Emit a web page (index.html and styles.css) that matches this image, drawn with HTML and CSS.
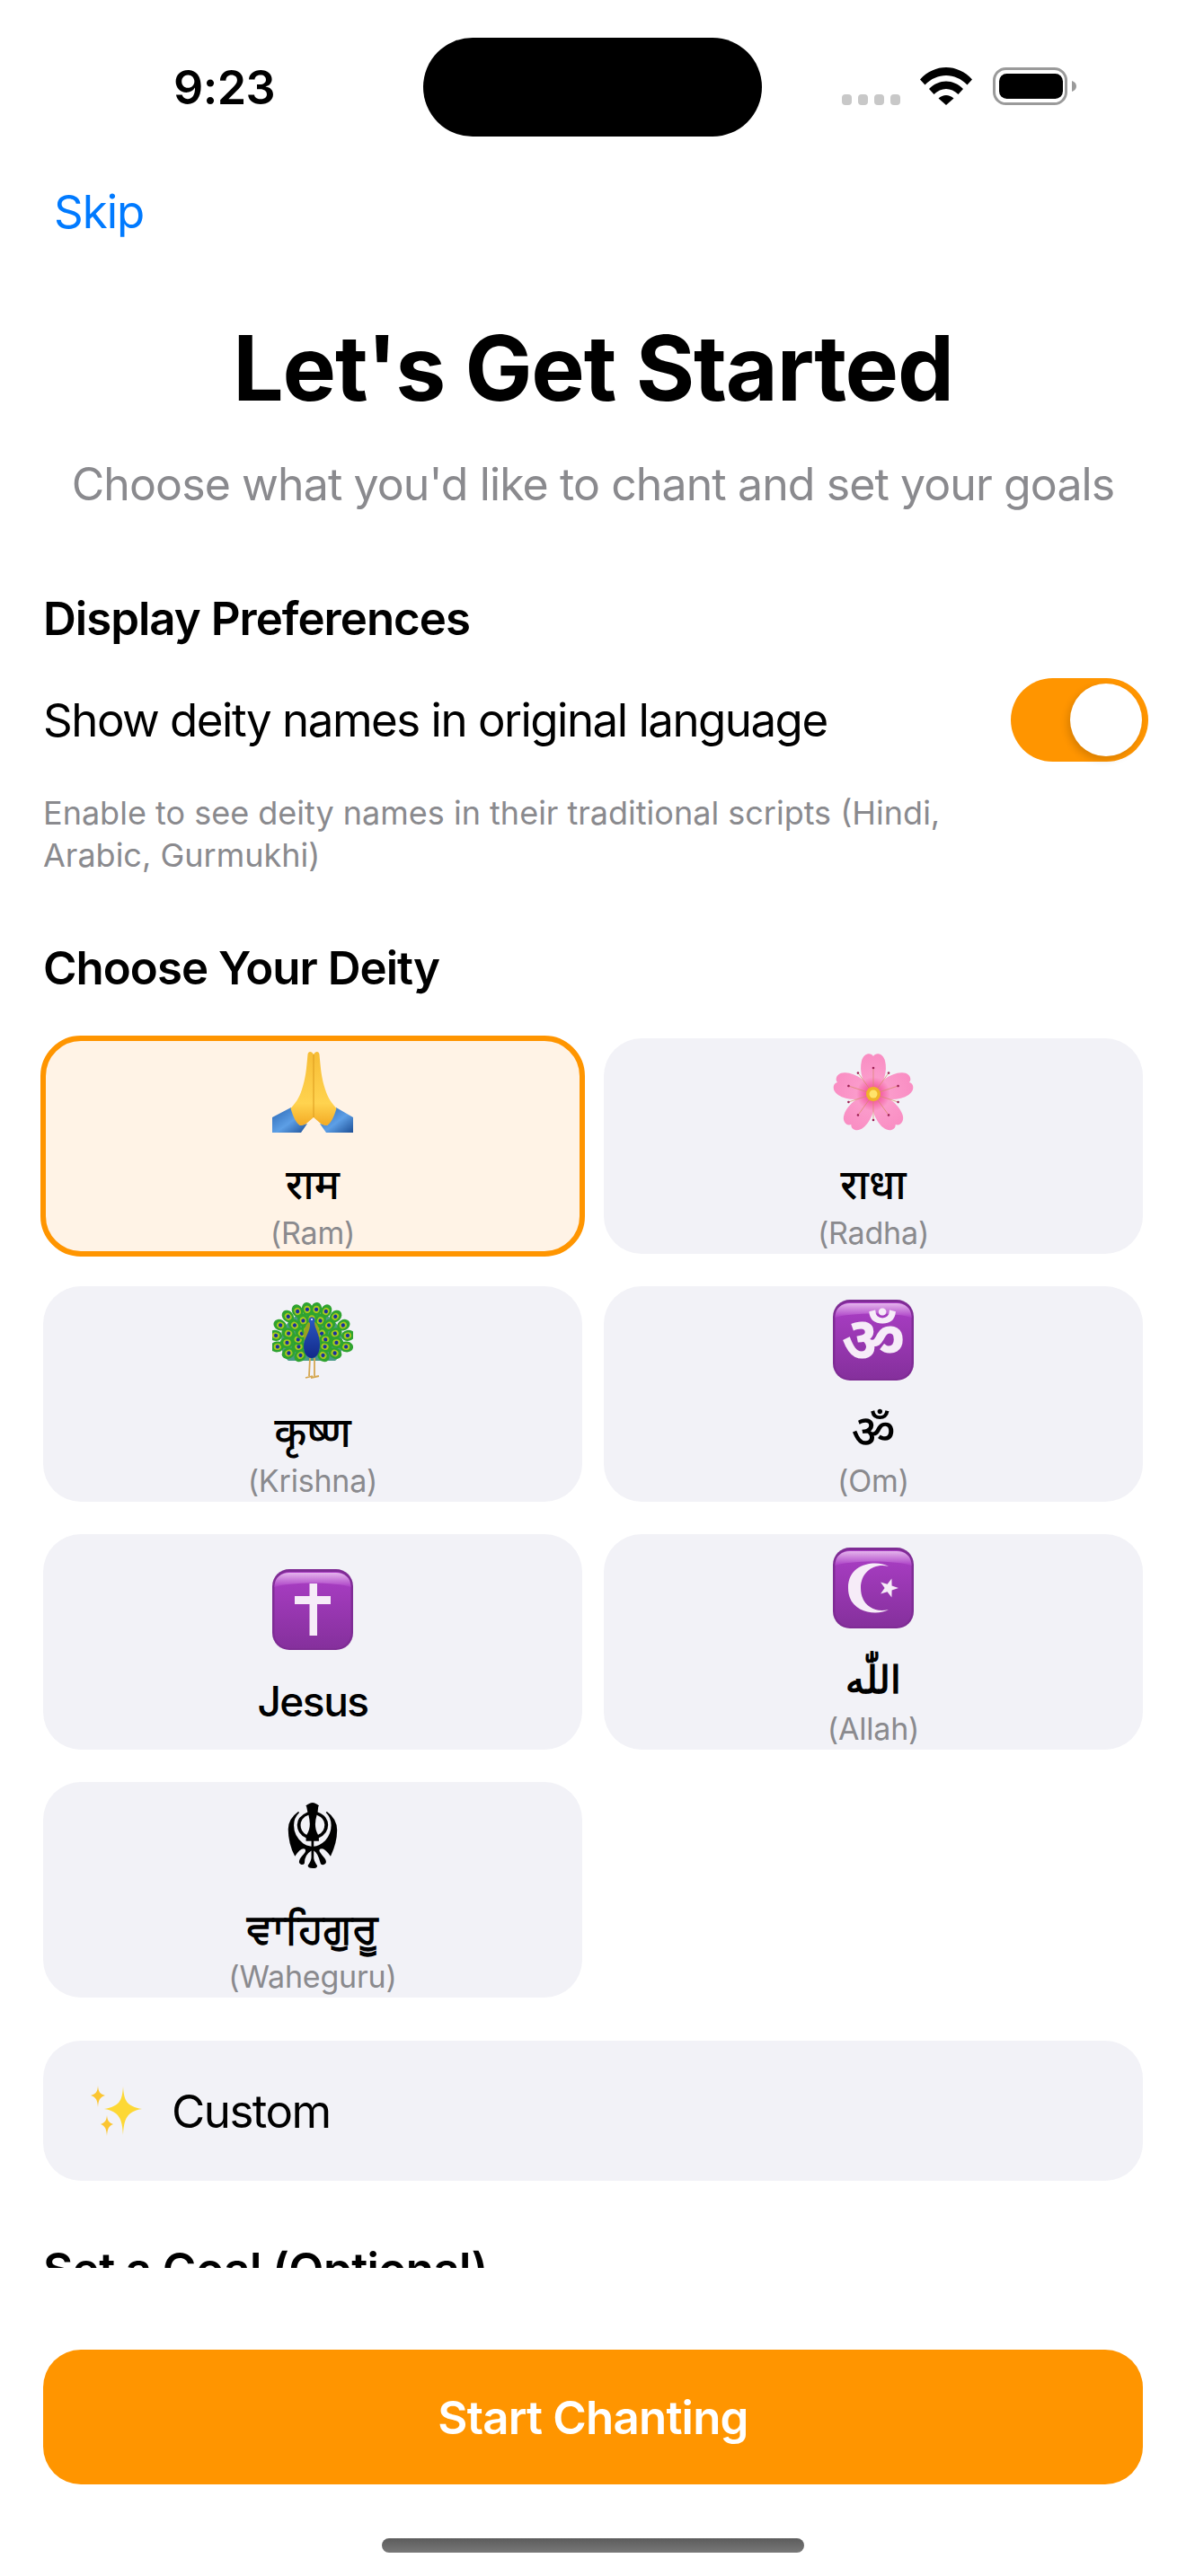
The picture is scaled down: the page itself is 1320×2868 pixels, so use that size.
FILE: index.html
```html
<!DOCTYPE html>
<html>
  <head>
    <title>Let's Get Started</title>
    <meta charset="utf-8">
    <link rel="stylesheet" href="styles.css">
  </head>
  <body>
    <div class="screen">
      <!-- STATUS BAR -->
      <header class="status">
        <span class="time">9:23</span>
        <div class="island"></div>
        <div class="signal"><i></i><i></i><i></i><i></i></div>
        <svg class="wifi" width="58" height="42" viewBox="0 0 58 42">
          <path d="M0 13.5 C16 -4.5 42 -4.5 58 13.5 L52.500 19.500 C39 5.500 19 5.500 5.500 19.500 Z"/>
          <path d="M10 24 C21 12.500 37 12.500 48 24 L42.500 30 C34.500 22 23.500 22 15.500 30 Z"/>
          <path d="M20.500 34.500 C25.500 29.800 32.500 29.800 37.500 34.500 L29 42 Z"/>
        </svg>
        <svg class="battery" width="93" height="42" viewBox="0 0 93 42">
          <rect x="1.500" y="1.500" width="80" height="39" rx="13" fill="none" stroke="#9a9a9a" stroke-width="3"/>
          <rect x="7" y="7" width="71" height="28" rx="8.500"/>
          <path d="M88 15 C91 16 93 18 93 21 C93 24 91 26 88 27 Z" fill="#9a9a9a"/>
        </svg>
      </header>

      <!-- SCROLLING CONTENT -->
      <main class="scroll">
        <nav class="nav"><a class="skip">Skip</a></nav>
        <h1 class="title">Let's Get Started</h1>
        <p class="subtitle">Choose what you'd like to chant and set your goals</p>

        <section class="content">
          <h2 class="heading heading-first">Display Preferences</h2>
          <div class="toggle-row">
            <span class="toggle-label">Show deity names in original language</span>
            <div class="switch"><div class="thumb"></div></div>
          </div>
          <p class="note">Enable to see deity names in their traditional scripts (Hindi, Arabic, Gurmukhi)</p>

          <h2 class="heading">Choose Your Deity</h2>
          <div class="deity-grid">
            <div class="deity selected">
              <div class="emoji">
                <svg width="90" height="90" viewBox="0 0 90 90">
                  <defs>
                    <linearGradient id="hand" x1="0" y1="0" x2="0" y2="1">
                      <stop offset="0" stop-color="#f7bd35"/>
                      <stop offset="0.7" stop-color="#ffd34f"/>
                      <stop offset="1" stop-color="#f3aa24"/>
                    </linearGradient>
                    <linearGradient id="sleeve" x1="0" y1="0" x2="1" y2="1">
                      <stop offset="0" stop-color="#2a66b3"/>
                      <stop offset="0.55" stop-color="#5d9fe6"/>
                      <stop offset="1" stop-color="#1d4f96"/>
                    </linearGradient>
                    <radialGradient id="petal-fill" gradientUnits="userSpaceOnUse" cx="45" cy="47" r="47">
                      <stop offset="0.12" stop-color="#f2529b"/>
                      <stop offset="0.4" stop-color="#fb9bcb"/>
                      <stop offset="1" stop-color="#f98cc2"/>
                    </radialGradient>
                    <path id="petal" d="M45 47 C33 38 29 21 32 10 C34 2 42 0 45 5 C48 0 56 2 58 10 C61 21 57 38 45 47 Z" fill="url(#petal-fill)"/>
                    <g id="stamen">
                      <path d="M45 47 L45 18" stroke="#d98a6a" stroke-width="0.700"/>
                      <circle cx="45" cy="18" r="1.300" fill="#9c1f55"/>
                    </g>
                  </defs>
                  <path d="M0 73 L21 62 L31 82 L39 80 L32 90 L0 90 Z" fill="url(#sleeve)"/>
                  <path d="M90 73 L71 62 L61 82 L53 80 L60 90 L90 90 Z" fill="url(#sleeve)"/>
                  <path d="M46 3 C44 -1 40 -1 39.500 3 C38 20 37 30 33 42 C30 52 25 58 20.500 63 C23 72 27 80 31 82 C36 83 41 77 46 73 Z" fill="url(#hand)"/>
                  <path d="M46 3 C48 -1 52 -1 52.500 3 C54 20 55 30 59 42 C62 52 67 58 71.500 63 C69 72 65 80 61 82 C56 83 51 77 46 73 Z" fill="url(#hand)"/>
                  <path d="M46 3 L46 73" stroke="#dc9a1e" stroke-width="1"/>
                </svg>
              </div>
              <div class="name">राम</div>
              <div class="latin">(Ram)</div>
            </div>
            <div class="deity">
              <div class="emoji">
                <svg width="90" height="90" viewBox="0 0 90 90">
                  <use href="#petal"/>
                  <use href="#petal" transform="rotate(72 45 47)"/>
                  <use href="#petal" transform="rotate(144 45 47)"/>
                  <use href="#petal" transform="rotate(216 45 47)"/>
                  <use href="#petal" transform="rotate(288 45 47)"/>
                  <use href="#stamen"/>
                  <use href="#stamen" transform="rotate(36 45 47)"/>
                  <use href="#stamen" transform="rotate(72 45 47)"/>
                  <use href="#stamen" transform="rotate(108 45 47)"/>
                  <use href="#stamen" transform="rotate(144 45 47)"/>
                  <use href="#stamen" transform="rotate(180 45 47)"/>
                  <use href="#stamen" transform="rotate(216 45 47)"/>
                  <use href="#stamen" transform="rotate(252 45 47)"/>
                  <use href="#stamen" transform="rotate(288 45 47)"/>
                  <use href="#stamen" transform="rotate(324 45 47)"/>
                  <circle cx="45" cy="47" r="8" fill="#f0b429"/>
                  <circle cx="45" cy="47" r="4.500" fill="#ffe36b"/>
                </svg>
              </div>
              <div class="name">राधा</div>
              <div class="latin">(Radha)</div>
            </div>
            <div class="deity">
              <div class="emoji">
                <svg width="90" height="90" viewBox="0 0 90 90">
                  <defs>
                    <g id="eye">
                      <ellipse cx="0" cy="0" rx="6" ry="7.500" fill="#2fa32f"/>
                      <ellipse cx="0" cy="0.500" rx="3.600" ry="4.200" fill="#a8c81e"/>
                      <circle cx="0" cy="0.500" r="2.100" fill="#1a2fa0"/>
                    </g>
                    <linearGradient id="peacock-body" x1="0" y1="0" x2="0" y2="1">
                      <stop offset="0" stop-color="#2a55c0"/>
                      <stop offset="1" stop-color="#122a8a"/>
                    </linearGradient>
                  </defs>
                  <path d="M44 14 C64 14 78 28 78 48 C78 58 75 64 70 68 L18 68 C13 64 10 58 10 48 C10 28 24 14 44 14 Z" fill="#4a9a86"/>
                  <use href="#eye" transform="rotate(-98 44 47) translate(44 8)"/>
                  <use href="#eye" transform="rotate(-80 44 47) translate(44 6)"/>
                  <use href="#eye" transform="rotate(-62 44 47) translate(44 7)"/>
                  <use href="#eye" transform="rotate(-43 44 47) translate(44 8)"/>
                  <use href="#eye" transform="rotate(-25 44 47) translate(44 9)"/>
                  <use href="#eye" transform="rotate(-8 44 47) translate(44 10)"/>
                  <use href="#eye" transform="rotate(8 44 47) translate(44 10)"/>
                  <use href="#eye" transform="rotate(25 44 47) translate(44 9)"/>
                  <use href="#eye" transform="rotate(43 44 47) translate(44 8)"/>
                  <use href="#eye" transform="rotate(62 44 47) translate(44 7)"/>
                  <use href="#eye" transform="rotate(80 44 47) translate(44 6)"/>
                  <use href="#eye" transform="rotate(98 44 47) translate(44 8)"/>
                  <use href="#eye" transform="rotate(-116 44 47) translate(44 18)"/>
                  <use href="#eye" transform="rotate(-92 44 47) translate(44 19)"/>
                  <use href="#eye" transform="rotate(-70 44 47) translate(44 19)"/>
                  <use href="#eye" transform="rotate(-46 44 47) translate(44 20)"/>
                  <use href="#eye" transform="rotate(-22 44 47) translate(44 21)"/>
                  <use href="#eye" transform="rotate(0 44 47) translate(44 21)"/>
                  <use href="#eye" transform="rotate(22 44 47) translate(44 21)"/>
                  <use href="#eye" transform="rotate(46 44 47) translate(44 20)"/>
                  <use href="#eye" transform="rotate(70 44 47) translate(44 19)"/>
                  <use href="#eye" transform="rotate(92 44 47) translate(44 19)"/>
                  <use href="#eye" transform="rotate(116 44 47) translate(44 18)"/>
                  <use href="#eye" transform="rotate(-140 44 47) translate(44 27)"/>
                  <use href="#eye" transform="rotate(-110 44 47) translate(44 31)"/>
                  <use href="#eye" transform="rotate(-80 44 47) translate(44 31)"/>
                  <use href="#eye" transform="rotate(-50 44 47) translate(44 32)"/>
                  <use href="#eye" transform="rotate(-22 44 47) translate(44 33)"/>
                  <use href="#eye" transform="rotate(22 44 47) translate(44 33)"/>
                  <use href="#eye" transform="rotate(50 44 47) translate(44 32)"/>
                  <use href="#eye" transform="rotate(80 44 47) translate(44 31)"/>
                  <use href="#eye" transform="rotate(110 44 47) translate(44 31)"/>
                  <use href="#eye" transform="rotate(140 44 47) translate(44 27)"/>
                  <ellipse cx="44" cy="39" rx="9" ry="15" fill="#98a31f"/>
                  <path d="M42 25 C42 21 47 21 47 25 C47 32 53 38 53 50 C53 60 49 65 44 65 C39 65 35 60 35 52 C35 42 43 36 42 25 Z" fill="url(#peacock-body)"/>
                  <circle cx="44" cy="23" r="3.500" fill="#2a55c0"/>
                  <circle cx="44" cy="22" r="1" fill="#fff"/>
                  <path d="M42 65 L41 85 M47 65 L47 85 M37 87 L45 85 M43 87 L52 85" stroke="#d5a750" stroke-width="1.800" fill="none"/>
                </svg>
              </div>
              <div class="name">कृष्ण</div>
              <div class="latin">(Krishna)</div>
            </div>
            <div class="deity">
              <div class="emoji">
                <svg width="90" height="90" viewBox="0 0 90 90">
                  <defs>
                    <linearGradient id="tile" x1="0" y1="0" x2="0" y2="1">
                      <stop offset="0" stop-color="#ab3ec6"/>
                      <stop offset="1" stop-color="#85309c"/>
                    </linearGradient>
                    <linearGradient id="tile-shine" x1="0" y1="0" x2="0" y2="1">
                      <stop offset="0" stop-color="#e4b4ec"/>
                      <stop offset="1" stop-color="#ab3ec6"/>
                    </linearGradient>
                  </defs>
                  <rect width="90" height="90" rx="19" fill="#7f2c95"/>
                  <rect x="2.500" y="3" width="85" height="85" rx="17" fill="url(#tile)"/>
                  <path d="M2.500 20 C2.500 9 10 4 19 4 L71 4 C80 4 87.500 9 87.500 20 C72 14 18 14 2.500 20 Z" fill="url(#tile-shine)"/>
                  <text class="tile-om" x="45" y="69" text-anchor="middle">ॐ</text>
                </svg>
              </div>
              <div class="name name-om">ॐ</div>
              <div class="latin">(Om)</div>
            </div>
            <div class="deity">
              <div class="emoji">
                <svg width="90" height="90" viewBox="0 0 90 90">
                  <rect width="90" height="90" rx="19" fill="#7f2c95"/>
                  <rect x="2.500" y="3" width="85" height="85" rx="17" fill="url(#tile)"/>
                  <path d="M2.500 20 C2.500 9 10 4 19 4 L71 4 C80 4 87.500 9 87.500 20 C72 14 18 14 2.500 20 Z" fill="url(#tile-shine)"/>
                  <path d="M41.500 16 H50 V30 H65 V39 H50 V74 H41.500 V39 H25 V30 H41.500 Z" fill="#f6ecf8"/>
                </svg>
              </div>
              <div class="name name-latin">Jesus</div>
            </div>
            <div class="deity">
              <div class="emoji">
                <svg width="90" height="90" viewBox="0 0 90 90">
                  <rect width="90" height="90" rx="19" fill="#7f2c95"/>
                  <rect x="2.500" y="3" width="85" height="85" rx="17" fill="url(#tile)"/>
                  <path d="M2.500 20 C2.500 9 10 4 19 4 L71 4 C80 4 87.500 9 87.500 20 C72 14 18 14 2.500 20 Z" fill="url(#tile-shine)"/>
                  <path d="M62 21 C50 14 17 16 17 45 C17 74 50 76 62 69 C46 73 31 64 31 45 C31 27 46 17 62 21 Z" fill="#f6ecf8"/>
                  <path d="M73 45 L65.600 47.600 L65.400 55.500 L60.600 49.200 L53.100 51.500 L57.600 45 L53.100 38.500 L60.600 40.800 L65.400 34.500 L65.600 42.400 Z" fill="#f6ecf8"/>
                </svg>
              </div>
              <div class="name name-arabic">اللّٰه</div>
              <div class="latin">(Allah)</div>
            </div>
            <div class="deity">
              <div class="emoji khanda">☬</div>
              <div class="name name-gurmukhi">ਵਾਹਿਗੁਰੂ</div>
              <div class="latin">(Waheguru)</div>
            </div>
          </div>

          <div class="custom">
            <svg width="60" height="56" viewBox="0 0 60 56">
              <path d="M37 1 C38 17 41 23 58 26 C41 29 38 37 37 55 C36 37 33 29 16 26 C33 23 36 17 37 1 Z" fill="#fdd835"/>
              <path d="M9 0 C9.500 7 11 9 17 11 C11 13 9.500 16 9 24 C8.500 16 7 13 1 11 C7 9 8.500 7 9 0 Z" fill="#fbc531"/>
              <path d="M19 33 C19.500 39 21 41 26 43 C21 45 19.500 48 19 56 C18.500 48 17 45 12 43 C17 41 18.500 39 19 33 Z" fill="#fbc531"/>
            </svg>
            <span class="custom-label">Custom</span>
          </div>

          <h2 class="heading heading-goal">Set a Goal (Optional)</h2>
        </section>
      </main>

      <!-- BOTTOM BUTTON -->
      <footer class="footer">
        <button class="start">Start Chanting</button>
        <div class="home-bar"></div>
      </footer>
    </div>
  </body>
</html>
```

FILE: styles.css
```css
* {
  box-sizing: border-box;
  font-family: Inter, "Noto Sans", sans-serif;
}
body { margin: 0; background: #fff; }
.screen {
  display: flex;
  flex-direction: column;
  width: 1320px;
  height: 2868px;
  overflow: hidden;
}

/* status bar */
.status {
  position: relative;
  flex: none;
  display: flex;
  align-items: flex-start;
  height: 156px;
}
.time {
  width: 113px;
  margin: 67px 0 0 193px;
  font-size: 52px;
  font-weight: 600;
  line-height: 62px;
  letter-spacing: -0.6px;
  white-space: nowrap;
}
.island {
  position: absolute;
  left: 471px;
  top: 42px;
  width: 377px;
  height: 110px;
  border-radius: 55px;
  background: #000;
}
.signal {
  display: flex;
  gap: 7px;
  margin: 105px 0 0 631px;
}
.signal i {
  width: 11px;
  height: 12px;
  border-radius: 4px;
  background: #c8c8c8;
}
.wifi { margin: 75px 0 0 22px; }
.battery { margin: 75px 0 0 23px; }

/* scrolling area */
.scroll {
  flex: none;
  height: 2369px;
  overflow: hidden;
}
.nav { padding: 49px 0 0 60px; }
.skip {
  display: block;
  font-size: 51px;
  line-height: 62px;
  letter-spacing: -1px;
  color: #007aff;
}
.title {
  margin: 83px 0 0;
  font-size: 100px;
  font-weight: 700;
  line-height: 120px;
  letter-spacing: -1.2px;
  text-align: center;
}
.subtitle {
  margin: 39px 0 0;
  font-size: 50px;
  line-height: 60px;
  letter-spacing: -0.9px;
  text-align: center;
  color: #8a8a8e;
}
.content { padding: 0 48px; }
.heading {
  margin: 72px 0 0;
  font-size: 51px;
  font-weight: 600;
  line-height: 60px;
  letter-spacing: -1px;
}
.heading-first { margin-top: 90px; }
.heading-goal {
  margin-top: 69px;
  letter-spacing: -0.6px;
}
.toggle-row {
  display: flex;
  align-items: center;
  justify-content: space-between;
  margin: 36px -6px 0 0;
}
.toggle-label {
  font-size: 51px;
  letter-spacing: -1.5px;
}
.switch {
  display: flex;
  justify-content: flex-end;
  align-items: center;
  width: 153px;
  height: 93px;
  padding-right: 7px;
  border-radius: 47px;
  background: #ff9500;
}
.thumb {
  width: 80px;
  height: 81px;
  border-radius: 50%;
  background: #fff;
  box-shadow: -3px 4px 8px rgba(0, 0, 0, .15);
}
.note {
  margin: 34px 0 0;
  width: 1040px;
  font-size: 36px;
  line-height: 47px;
  color: #8a8a8e;
}

/* deity cards */
.deity-grid {
  display: grid;
  grid-template-columns: 600px 600px;
  grid-auto-rows: 240px;
  gap: 36px 24px;
  margin-top: 48px;
}
.deity {
  display: flex;
  flex-direction: column;
  align-items: center;
  justify-content: center;
  padding-top: 14px;
  border-radius: 42px;
  background: #f2f2f7;
}
.deity.selected {
  outline: 6px solid #ff9500;
  outline-offset: -3px;
  background: #fff3e6;
}
.emoji {
  display: flex;
  align-items: center;
  justify-content: center;
  flex: none;
  width: 90px;
  height: 90px;
}
.khanda {
  padding-top: 4px;
  font-family: "DejaVu Sans", sans-serif;
  font-size: 100px;
  line-height: 90px;
}
.tile-om {
  font-size: 70px;
  font-weight: 700;
  fill: #f6ecf8;
}
.name {
  margin-top: 28px;
  font-size: 46px;
  font-weight: 500;
  line-height: 58px;
}
.name-om { font-size: 52px; }
.name-latin { letter-spacing: -1.5px; }
.name-arabic { font-size: 42px; font-weight: 600; }
.name-gurmukhi { font-weight: 600; }
.latin {
  margin-top: 4px;
  font-size: 34px;
  line-height: 44px;
  letter-spacing: -0.2px;
  color: #8a8a8e;
}

/* custom row */
.custom {
  display: flex;
  align-items: center;
  gap: 31px;
  height: 156px;
  margin-top: 48px;
  padding-left: 52px;
  border-radius: 42px;
  background: #f2f2f7;
}
.custom-label {
  font-size: 51px;
  letter-spacing: -1.5px;
}

/* footer */
.footer {
  flex: 1;
  display: flex;
  flex-direction: column;
  align-items: center;
  padding-top: 91px;
}
.start {
  width: 1224px;
  height: 150px;
  border: 0;
  border-radius: 42px;
  background: #ff9500;
  color: #fff;
  font-size: 51px;
  font-weight: 600;
  letter-spacing: -0.8px;
}
.home-bar {
  width: 470px;
  height: 16px;
  margin-top: 60px;
  border-radius: 8px;
  background: linear-gradient(#5c5c5c, #787878);
}
```
